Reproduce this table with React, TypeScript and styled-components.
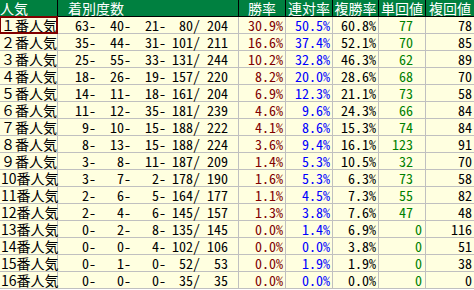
import React from "react";
import styled, { createGlobalStyle } from "styled-components";

const Global = createGlobalStyle`
  html, body { margin: 0; padding: 0; background: #ffffff; }
  body { font-family: "Noto Sans CJK JP", sans-serif; }
`;

const COLS = "57px 180px 46px 46px 45px 46px 48px";

const Table = styled.div`
  display: flex;
  flex-direction: column;
  width: 474px;
  font-family: "Noto Sans CJK JP", "Noto Sans CJK SC", sans-serif;
  font-size: 14px;
`;

const Row = styled.div<{ $head?: boolean }>`
  display: grid;
  grid-template-columns: ${COLS};
  column-gap: 1px;
  height: 16px;
  background: ${(p) => (p.$head ? "#000000" : "#c0c0c0")};
  border-bottom: 1px solid ${(p) => (p.$head ? "#000000" : "#c0c0c0")};
`;

const HeadCell = styled.div<{ $align?: string; $indent?: number }>`
  background: #008040;
  color: #ffffff;
  line-height: 16px;
  height: 16px;
  text-align: ${(p) => p.$align ?? "center"};
  padding-left: ${(p) => p.$indent ?? 0}px;
  white-space: nowrap;
`;

const Cell = styled.div<{ $color?: string; $pad?: number }>`
  background: #ffffe0;
  color: ${(p) => p.$color ?? "#000000"};
  line-height: 16px;
  height: 16px;
  text-align: right;
  padding-right: ${(p) => p.$pad ?? 2}px;
  white-space: pre;
  font-feature-settings: "hwid" 1;
`;

const Label = styled.div<{ $selected?: boolean }>`
  background: #ffffe0;
  color: #000000;
  line-height: 16px;
  height: 16px;
  padding-left: 1px;
  white-space: nowrap;
  outline: ${(p) => (p.$selected ? "2px solid #800000" : "none")};
  outline-offset: -1px;
  position: relative;
  z-index: ${(p) => (p.$selected ? 1 : 0)};
`;

const Counts = styled.div`
  background: #ffffe0;
  display: flex;
  line-height: 16px;
  height: 16px;
  font-feature-settings: "hwid" 1;
`;

const Part = styled.span<{ $w: number }>`
  flex: none;
  width: ${(p) => p.$w}px;
  text-align: right;
  white-space: pre;
`;

type R = [string, number, number, number, number, number, string, string, string, number, number];

const rows: R[] = [
  ["１番人気", 63, 40, 21, 80, 204, "30.9%", "50.5%", "60.8%", 77, 78],
  ["２番人気", 35, 44, 31, 101, 211, "16.6%", "37.4%", "52.1%", 70, 85],
  ["３番人気", 25, 55, 33, 131, 244, "10.2%", "32.8%", "46.3%", 62, 89],
  ["４番人気", 18, 26, 19, 157, 220, "8.2%", "20.0%", "28.6%", 68, 70],
  ["５番人気", 14, 11, 18, 161, 204, "6.9%", "12.3%", "21.1%", 73, 58],
  ["６番人気", 11, 12, 35, 181, 239, "4.6%", "9.6%", "24.3%", 66, 84],
  ["７番人気", 9, 10, 15, 188, 222, "4.1%", "8.6%", "15.3%", 74, 84],
  ["８番人気", 8, 13, 15, 188, 224, "3.6%", "9.4%", "16.1%", 123, 91],
  ["９番人気", 3, 8, 11, 187, 209, "1.4%", "5.3%", "10.5%", 32, 70],
  ["10番人気", 3, 7, 2, 178, 190, "1.6%", "5.3%", "6.3%", 73, 58],
  ["11番人気", 2, 6, 5, 164, 177, "1.1%", "4.5%", "7.3%", 55, 82],
  ["12番人気", 2, 4, 6, 145, 157, "1.3%", "3.8%", "7.6%", 47, 48],
  ["13番人気", 0, 2, 8, 135, 145, "0.0%", "1.4%", "6.9%", 0, 116],
  ["14番人気", 0, 0, 4, 102, 106, "0.0%", "0.0%", "3.8%", 0, 51],
  ["15番人気", 0, 1, 0, 52, 53, "0.0%", "1.9%", "1.9%", 0, 38],
  ["16番人気", 0, 0, 0, 35, 35, "0.0%", "0.0%", "0.0%", 0, 0],
];

export default function App() {
  return (
    <>
      <Global />
      <Table>
        <Row $head>
          <HeadCell $align="left">人気</HeadCell>
          <HeadCell $align="left" $indent={10}>着別度数</HeadCell>
          <HeadCell>勝率</HeadCell>
          <HeadCell>連対率</HeadCell>
          <HeadCell>複勝率</HeadCell>
          <HeadCell>単回値</HeadCell>
          <HeadCell>複回値</HeadCell>
        </Row>
        {rows.map((r, i) => (
          <Row key={r[0]}>
            <Label $selected={i === 0}>{r[0]}</Label>
            <Counts>
              <Part $w={38}>{`${r[1]}-`}</Part>
              <Part $w={35}>{`${r[2]}-`}</Part>
              <Part $w={35}>{`${r[3]}-`}</Part>
              <Part $w={34}>{`${r[4]}/`}</Part>
              <Part $w={28}>{`${r[5]}`}</Part>
            </Counts>
            <Cell $color="#800000">{r[6]}</Cell>
            <Cell $color="#0000ff">{r[7]}</Cell>
            <Cell>{r[8]}</Cell>
            <Cell $color="#008000" $pad={r[9] === 0 ? 3 : 12}>{r[9]}</Cell>
            <Cell>{r[10]}</Cell>
          </Row>
        ))}
      </Table>
    </>
  );
}
